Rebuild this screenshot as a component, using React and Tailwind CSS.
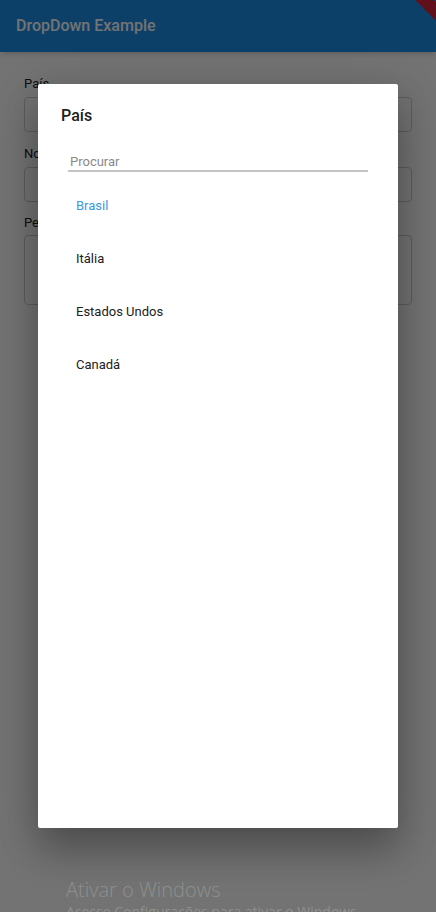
import React from "react";

export default function App() {
  const items = ["Brasil", "Itália", "Estados Undos", "Canadá"];
  return (
    <div className="relative w-[436px] h-[912px] overflow-hidden bg-white" style={{ fontFamily: "Roboto, 'Noto Sans', sans-serif" }}>
      {/* underlying page */}
      <div className="flex h-[52px] items-center bg-[#1c8ee8] px-4 shadow-md">
        <span className="text-[16px] font-medium text-white">DropDown Example</span>
      </div>
      <div className="flex flex-col px-6 pt-[24px]">
        <span className="text-[13px] leading-4 text-[#222]">País</span>
        <div className="mt-[5px] h-[35px] rounded-[4px] border border-[#cfcfcf]" />
        <span className="mt-[14px] text-[13px] leading-4 text-[#222]">Nome</span>
        <div className="mt-[5px] h-[35px] rounded-[4px] border border-[#cfcfcf]" />
        <span className="mt-[13px] text-[13px] leading-4 text-[#222]">Peso</span>
        <div className="mt-[4px] h-[70px] rounded-[4px] border border-[#cfcfcf]" />
      </div>

      {/* debug banner */}
      <div className="absolute right-[-28px] top-[-7px] h-[13px] w-[80px] rotate-45 bg-[#d3243c]">
        <div className="absolute left-[30px] top-[3px] h-[6px] w-[6px] rounded-full bg-white" />
      </div>

      {/* modal barrier */}
      <div className="absolute inset-0 bg-[#000000]/[0.55]" />

      {/* dialog */}
      <div className="absolute left-[38px] top-[84px] flex h-[744px] w-[360px] flex-col rounded-[2px] bg-white shadow-[0_24px_38px_rgba(0,0,0,0.22),0_9px_46px_rgba(0,0,0,0.18)]">
        <div className="pl-[23px] pt-[22px] text-[16px] font-medium leading-5 text-[#212121]">País</div>
        <div className="mx-[30px] mt-[25px] border-b-2 border-[#c4c4c4] pl-[2px] pt-[3px] text-[13px] leading-4 text-[#8a8a8a]">
          Procurar
        </div>
        <div className="mt-[7px] flex flex-col">
          {items.map((it, i) => (
            <div
              key={it}
              className={`flex h-[53px] items-center pl-[38px] text-[13px] ${i === 0 ? "text-[#3a99e0]" : "text-[#212121]"}`}
            >
              {it}
            </div>
          ))}
        </div>
      </div>

      {/* windows watermark */}
      <div className="absolute left-[66px] top-[876px] flex flex-col text-[#8e908d]" style={{ fontFamily: "'Open Sans', 'Noto Sans', sans-serif" }}>
        <span className="text-[20px] font-light leading-[27px]">Ativar o Windows</span>
        <span className="text-[14px] leading-[18px]">Acesse Configurações para ativar o Windows.</span>
      </div>
    </div>
  );
}
